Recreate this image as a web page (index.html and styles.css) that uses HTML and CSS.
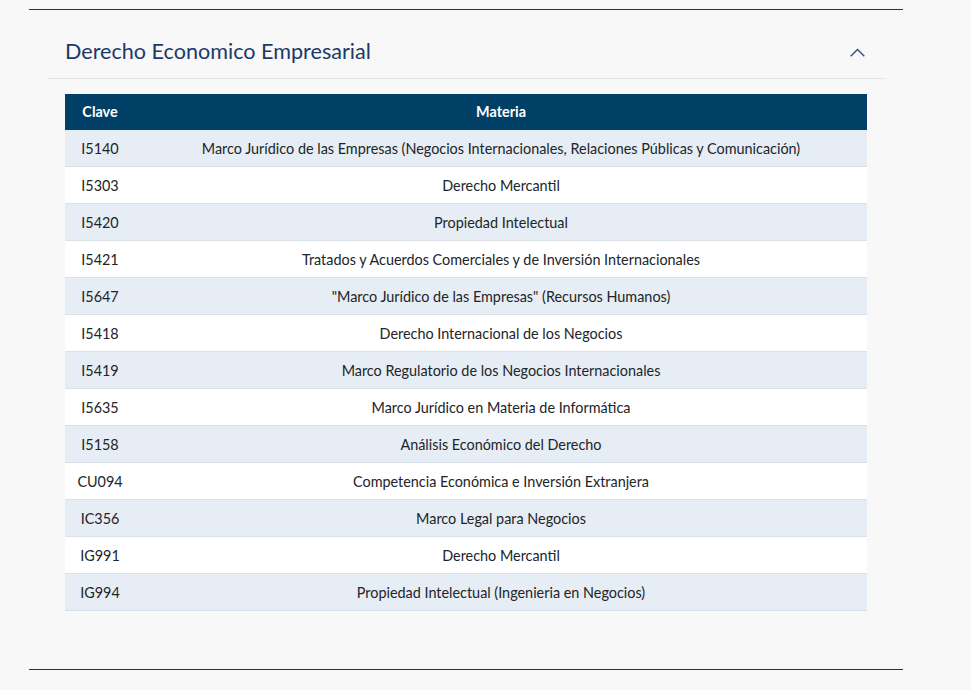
FILE: index.html
```html
<!DOCTYPE html>
<html lang="es">
<head>
<meta charset="utf-8">
<title>Derecho Economico Empresarial</title>
<link rel="stylesheet" href="styles.css">
</head>
<body>
<div class="section">
  <div class="accordion">
    <div class="acc-header">
      <h2 class="acc-title">Derecho Economico Empresarial</h2>
      <svg class="chevron" width="15" height="9" viewBox="0 0 15 9" aria-hidden="true">
        <path d="M0.7 8.3 L7.5 1.5 L14.3 8.3" fill="none" stroke="#2f4f7f" stroke-width="1.4"/>
      </svg>
    </div>
    <div class="acc-body">
      <table class="courses">
        <thead>
          <tr><th class="col-key">Clave</th><th>Materia</th></tr>
        </thead>
        <tbody>
          <tr><td>I5140</td><td>Marco Jurídico de las Empresas (Negocios Internacionales, Relaciones Públicas y Comunicación)</td></tr>
          <tr><td>I5303</td><td>Derecho Mercantil</td></tr>
          <tr><td>I5420</td><td>Propiedad Intelectual</td></tr>
          <tr><td>I5421</td><td>Tratados y Acuerdos Comerciales y de Inversión Internacionales</td></tr>
          <tr><td>I5647</td><td>"Marco Jurídico de las Empresas" (Recursos Humanos)</td></tr>
          <tr><td>I5418</td><td>Derecho Internacional de los Negocios</td></tr>
          <tr><td>I5419</td><td>Marco Regulatorio de los Negocios Internacionales</td></tr>
          <tr><td>I5635</td><td>Marco Jurídico en Materia de Informática</td></tr>
          <tr><td>I5158</td><td>Análisis Económico del Derecho</td></tr>
          <tr><td>CU094</td><td>Competencia Económica e Inversión Extranjera</td></tr>
          <tr><td>IC356</td><td>Marco Legal para Negocios</td></tr>
          <tr><td>IG991</td><td>Derecho Mercantil</td></tr>
          <tr><td>IG994</td><td>Propiedad Intelectual (Ingenieria en Negocios)</td></tr>
        </tbody>
      </table>
    </div>
  </div>
</div>
</body>
</html>
```

FILE: styles.css
```css
html, body {
  margin: 0;
  padding: 0;
  background: #f8f8f8;
}
body {
  font-family: Lato, "Liberation Sans", sans-serif;
  color: #212529;
  padding-top: 9px;
}
.section {
  margin-left: 29px;
  width: 874px;
  border-top: 1px solid #0f3a5c;
  border-bottom: 1px solid #0f3a5c;
  padding-bottom: 58px;
}
.accordion {
  margin: 0 18px;
}
.acc-header {
  display: flex;
  align-items: center;
  justify-content: space-between;
  padding: 27px 20px 13px 18px;
  border-bottom: 1px solid #e1e5eb;
}
.acc-title {
  margin: 0;
  font-size: 21.6px;
  line-height: 28px;
  font-weight: 400;
  color: #1c3a68;
}
.chevron {
  display: block;
  margin-top: 2px;
}
.acc-body {
  padding: 15px 18px 0 18px;
}
.courses {
  width: 100%;
  border-collapse: collapse;
  font-size: 14.4px;
  line-height: 18px;
}
.courses th {
  background: #003f66;
  color: #ffffff;
  font-weight: 700;
  height: 36px;
  padding: 0;
  text-align: center;
}
.courses .col-key {
  width: 70px;
}
.courses td {
  height: 35px;
  padding: 1px 0 0 0;
  text-align: center;
  border-bottom: 1px solid #d9e0e8;
}
.courses tbody tr:nth-child(odd) td {
  background: #e6edf4;
}
.courses tbody tr:nth-child(even) td {
  background: #ffffff;
}
```
